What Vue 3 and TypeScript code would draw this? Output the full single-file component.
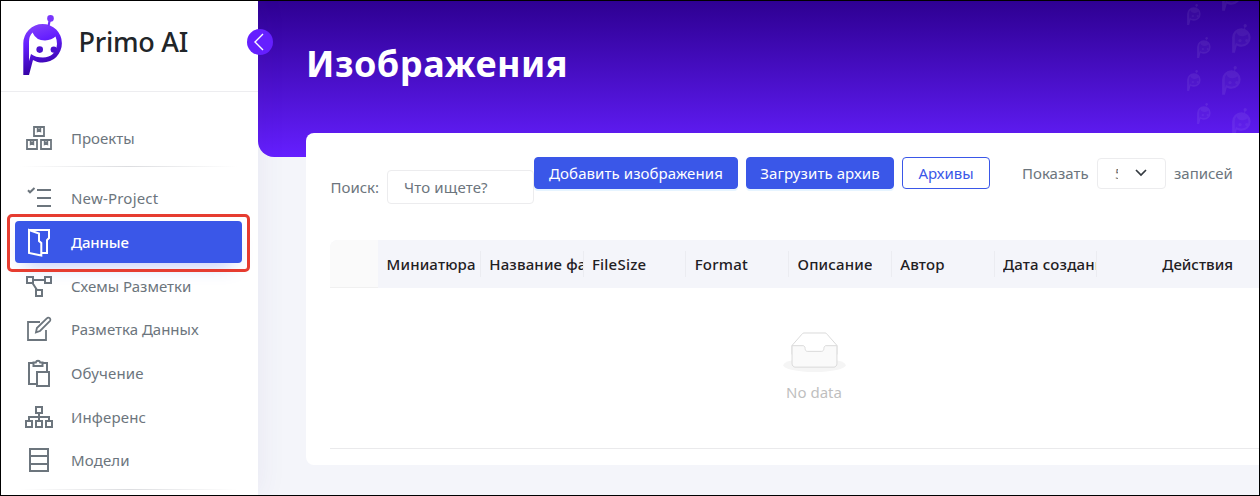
<script setup lang="ts">
interface NavItem {
  label: string
  icon: string
  cls: string
  active?: boolean
  dividerAfter?: boolean
}

const navItems: NavItem[] = [
  {
    label: 'Проекты',
    cls: 'projects',
    dividerAfter: true,
    icon: 'M10 4h10v9H10zM3 17h10v9H3zM17 17h10v9H17zM13.7 5v3l1.3-1 1.3 1V5M6.7 18v3l1.3-1 1.3 1v-3M20.7 18v3l1.3-1 1.3 1v-3',
  },
  { label: 'New-Project', cls: 'new-project', icon: 'M13 7h14M13 15h14M13 23h14M4 7.3l2 2 4.5-4.3' },
  {
    label: 'Данные',
    cls: 'data',
    active: true,
    icon: 'M5 3l10 3.5V14l2.3 2V28.5L5 26zM5 3h20v8l-2 2.2V26h-5.5',
  },
  {
    label: 'Схемы Разметки',
    cls: 'schemes',
    icon: 'M3 6h6v6H3zM21 6h6v6h-6zM12 19h6v6h-6zM9 9h12M8.5 12l4.5 7',
  },
  {
    label: 'Разметка Данных',
    cls: 'markup',
    icon: 'M16 8H4v18h18V16M12 18.3l.9-4.3L22.8 4.3a2 2 0 0 1 3 2.8L16 17z',
  },
  {
    label: 'Обучение',
    cls: 'training',
    icon: 'M12 26H5V5h4.500M18.500 5H23v8M13 14h12v14H13zM9.500 4.500h2.300a2.300 2.300 0 0 1 4.400 0h2.300V8h-9z',
  },
  {
    label: 'Инференс',
    cls: 'inference',
    icon: 'M12 5h6v6h-6zM2 19h6v6H2zM12 19h6v6h-6zM22 19h6v6h-6zM15 11v8M5 19v-4h20v4',
  },
  { label: 'Модели', cls: 'models', dividerAfter: true, icon: 'M6 4h18v22H6zM6 11h18M6 19h18' },
]

const columns: { title: string; cls: string }[] = [
  { title: 'Миниатюра', cls: 'thumb' },
  { title: 'Название файла', cls: 'name' },
  { title: 'FileSize', cls: 'size' },
  { title: 'Format', cls: 'format' },
  { title: 'Описание', cls: 'descr' },
  { title: 'Автор', cls: 'author' },
  { title: 'Дата создания', cls: 'date' },
]

const robotHead =
  'M.3 60V28.300A19.300 19.300 0 1 1 19.700 47.600C16 47.600 12.600 46.600 10 45L6 60Z' +
  'M6 46V27Q6 21 9.500 17.500Q13 25.500 22 25.500Q29 25 32.500 21.500Q34 25 34 29C33.500 37.500 28 42.500 20 42.500Q12.500 42.500 8 39Z'

const watermarks: { x: number; y: number; s: number }[] = [
  { x: 7, y: 3, s: 0.35 },
  { x: 17, y: 36, s: 0.35 },
  { x: 7, y: 69, s: 0.35 },
  { x: 17, y: 102, s: 0.35 },
  { x: 42, y: -19, s: 0.48 },
  { x: 52, y: 23, s: 0.48 },
  { x: 42, y: 65, s: 0.48 },
  { x: 52, y: 107, s: 0.48 },
]
</script>

<template>
  <div class="frame">
    <aside class="sidebar">
      <div class="brand">
        <svg class="logo" viewBox="0 0 40 60" width="40" height="60">
          <defs>
            <linearGradient id="brandFill" x1="0" y1="0" x2="0.25" y2="1">
              <stop offset="0" stop-color="#8a48f8" />
              <stop offset="0.4" stop-color="#651fff" />
              <stop offset="1" stop-color="#3200a0" />
            </linearGradient>
          </defs>
          <path :d="robotHead" fill="url(#brandFill)" fill-rule="evenodd" />
          <path d="M27 4l-1.500 7" stroke="#6f2bfc" stroke-width="2.200" />
          <circle cx="27.500" cy="3.400" r="3.300" fill="#7935fb" />
          <circle cx="16.700" cy="34.600" r="3.300" fill="#4c12cf" />
          <circle cx="30.800" cy="34.600" r="3.200" fill="#4a10cc" />
        </svg>
        <span class="brand-name">Primo AI</span>
        <button class="collapse" type="button" aria-label="Свернуть">
          <svg viewBox="0 0 26 26" width="26" height="26"><path d="M16 5L8 13l8 8" /></svg>
        </button>
      </div>
      <nav class="nav">
        <template v-for="item in navItems" :key="item.cls">
          <a class="nav-item" :class="[item.cls, { active: item.active }]">
            <svg class="nav-icon" viewBox="0 0 30 30" width="30" height="30"><path :d="item.icon" /></svg>
            <span class="nav-label">{{ item.label }}</span>
          </a>
          <div v-if="item.dividerAfter" class="divider"></div>
        </template>
      </nav>
    </aside>

    <main class="main">
      <header class="hero">
        <h1>Изображения</h1>
        <svg class="pattern" viewBox="0 0 79 156" width="79" height="156">
          <g v-for="(w, i) in watermarks" :key="i" :transform="`translate(${w.x} ${w.y}) scale(${w.s})`">
            <path :d="robotHead" fill-rule="evenodd" />
            <path d="M6 46V27Q6 21 9.500 17.500H33L34 29C33.500 37.500 28 42.500 20 42.500Q12.500 42.500 8 39Z" opacity="0.4" />
            <circle cx="27.500" cy="3.400" r="3.400" />
            <path d="M26 6h2l-1 4h-2z" />
            <circle cx="16.700" cy="34.600" r="3.300" />
            <circle cx="30.800" cy="34.600" r="3.200" />
          </g>
        </svg>
      </header>

      <section class="card">
        <div class="toolbar">
          <label class="search">
            <span class="search-label">Поиск:</span>
            <span class="search-box"><span>Что ищете?</span></span>
          </label>
          <div class="buttons">
            <button class="btn primary add" type="button"><span>Добавить изображения</span></button>
            <button class="btn primary upload" type="button"><span>Загрузить архив</span></button>
            <button class="btn outline" type="button"><span>Архивы</span></button>
          </div>
          <div class="page-size">
            <span class="show">Показать</span>
            <span class="select">
              <span class="value">50</span>
              <svg viewBox="0 0 12 8" width="12" height="8"><path d="M1 1l5 5 5-5" /></svg>
            </span>
            <span class="entries">записей</span>
          </div>
        </div>

        <div class="table">
          <div class="thead">
            <div class="th check"></div>
            <div v-for="c in columns" :key="c.cls" class="th" :class="c.cls">
              <span class="th-text">{{ c.title }}</span>
            </div>
            <div class="th actions"><span class="th-text">Действия</span></div>
          </div>
          <div class="empty">
            <svg width="63" height="40" viewBox="0 0 64 41">
              <g transform="translate(0 1)" fill="none" fill-rule="evenodd">
                <ellipse fill="#f5f5f5" cx="32" cy="33" rx="32" ry="7" />
                <g stroke="#d9d9d9">
                  <path d="M55 12.760L44.854 1.258C44.367.474 43.656 0 42.907 0H21.093c-.749 0-1.460.474-1.947 1.257L9 12.761V22h46v-9.240z" />
                  <path fill="#fafafa" d="M41.613 15.931c0-1.605.994-2.930 2.227-2.931H55v18.137C55 33.260 53.680 35 52.050 35h-40.100C10.320 35 9 33.259 9 31.137V13h11.160c1.233 0 2.227 1.323 2.227 2.928v.022c0 1.605 1.005 2.901 2.237 2.901h14.752c1.232 0 2.237-1.308 2.237-2.913v-.007z" />
                </g>
              </g>
            </svg>
            <span>No data</span>
          </div>
        </div>
      </section>
    </main>
  </div>
</template>

<style>
body {
  margin: 0;
  overflow: hidden;
}
</style>

<style scoped>
* {
  box-sizing: border-box;
}
.frame {
  width: 1260px;
  height: 496px;
  display: flex;
  overflow: hidden;
  border: 1px solid #000;
  background: #f4f5fa;
  font-family: 'Noto Sans', 'Open Sans', sans-serif;
  font-size: 15px;
  color: #6c757d;
  white-space: nowrap;
}
.sidebar {
  flex: none;
  width: 257px;
  position: relative;
  z-index: 2;
  background: #fff;
  box-shadow: 0 0 28px rgba(82, 63, 145, 0.08);
}
.brand {
  position: relative;
  display: flex;
  height: 91px;
  padding: 14px 0 0 22px;
  border-bottom: 1px solid #ededf0;
}
.brand-name {
  margin-left: 15.500px;
  font-size: 27px;
  font-weight: 500;
  line-height: 54px;
  letter-spacing: -0.250px;
  color: #212529;
}
.collapse {
  position: absolute;
  right: -15px;
  top: 28px;
  width: 26px;
  height: 26px;
  padding: 0;
  border: 0;
  border-radius: 50%;
  background: #651fff;
}
.collapse svg {
  display: block;
  fill: none;
  stroke: #fff;
  stroke-width: 1.400;
}
.nav {
  padding: 25px 16px 0 14px;
}
.nav-item {
  display: flex;
  align-items: center;
  height: 42px;
  margin-bottom: 1.700px;
  padding-left: 9px;
  border-radius: 4px;
}
.nav-icon {
  flex: none;
  fill: none;
  stroke: #6c757d;
  stroke-width: 2;
}
.nav-label {
  margin-left: 17px;
}
.new-project .nav-label {
  letter-spacing: 0.200px;
}
.training .nav-label {
  letter-spacing: 0.150px;
}
.inference .nav-label,
.models .nav-label {
  letter-spacing: 0.150px;
}
.data .nav-label {
  letter-spacing: -0.150px;
}
.projects .nav-icon,
.markup .nav-icon {
  stroke-width: 1.800;
}
.divider {
  height: 1px;
  margin: 7.300px 5px 10px;
  background: linear-gradient(90deg, transparent, #dcdde0 50%, transparent);
}
.active {
  position: relative;
  background: #3a57e8;
  color: #fff;
  font-weight: 500;
  box-shadow: 0 10px 20px -10px rgba(58, 87, 232, 0.4);
}
.active::after {
  content: '';
  position: absolute;
  inset: -7px -8px -9px;
  border: 3px solid #e63c30;
  border-radius: 5px;
}
.active .nav-icon {
  stroke: #fff;
}
.main {
  flex: 1;
  min-width: 0;
}
.hero {
  position: relative;
  height: 156px;
  padding: 36px 0 0 48px;
  border-bottom-left-radius: 16px;
  background: linear-gradient(180deg, #2e0092, #651fff);
}
h1 {
  margin: 0;
  font-size: 36px;
  line-height: 54px;
  font-weight: 700;
  letter-spacing: 0.500px;
  color: #fff;
}
.pattern {
  position: absolute;
  right: 0;
  top: 0;
  fill: #fff;
  opacity: 0.070;
}
.card {
  position: relative;
  width: 1016px;
  height: 332px;
  margin: -24px 0 0 48px;
  padding: 24px;
  border-radius: 8px;
  background: #fff;
}
.toolbar {
  display: flex;
  align-items: flex-start;
  height: 83px;
}
.search {
  display: flex;
  align-items: center;
  width: 204px;
  height: 34px;
  margin-top: 13px;
}
.search-label {
  width: 57px;
  padding-left: 0.500px;
}
.search-box {
  flex: 1;
  height: 34px;
  padding-left: 16px;
  border: 1px solid #ececee;
  border-radius: 4px;
  line-height: 33px;
  letter-spacing: 0.150px;
}
.buttons {
  display: flex;
  gap: 8px;
}
.btn {
  height: 32px;
  padding: 0;
  border: 1px solid #3a57e8;
  border-radius: 4px;
  font: inherit;
  line-height: 30px;
  text-align: center;
}
.primary {
  background: #3a57e8;
  color: #fff;
  letter-spacing: 0.080px;
  box-shadow: 0 2px 0 rgba(5, 145, 255, 0.1);
}
.add {
  width: 204px;
}
.upload {
  width: 148px;
}
.outline {
  width: 88px;
  background: #fff;
  color: #3a57e8;
}
.page-size {
  display: flex;
  align-items: center;
  height: 32px;
  margin-left: 32px;
}
.show {
  width: 75px;
}
.select {
  display: flex;
  align-items: center;
  width: 69px;
  height: 31px;
  margin-right: 8px;
  padding-left: 17px;
  border: 1px solid #ececee;
  border-radius: 4px;
}
.select .value {
  width: 3px;
  margin-right: 17px;
  overflow: hidden;
  font-size: 14px;
}
.select svg {
  fill: none;
  stroke: #343a40;
  stroke-width: 1.700;
}
.table {
  height: 209px;
  border-bottom: 1px solid #eaeaec;
}
.thead {
  display: flex;
  height: 48px;
  border-radius: 8px 8px 0 0;
  overflow: hidden;
  background: #f4f5fa;
}
.th {
  position: relative;
  display: flex;
  align-items: center;
  flex: none;
  width: 102.750px;
  padding: 0 0 0 8.500px;
  font-weight: 500;
  letter-spacing: 0.150px;
  color: #1f2023;
}
.size,
.format {
  letter-spacing: 0.200px;
}
.th + .th:not(.actions)::after {
  content: '';
  position: absolute;
  right: 0;
  top: 11px;
  width: 1px;
  height: 26px;
  background: #ebecf1;
}
.th-text {
  overflow: hidden;
}
.check {
  width: 48px;
  border-bottom: 1px solid #f0f0f0;
  background: #fafafa;
}
.actions {
  flex: 1;
  justify-content: center;
  padding: 0;
  letter-spacing: 0;
}
.empty {
  display: flex;
  flex-direction: column;
  align-items: center;
  padding-top: 44px;
  color: #bfbfbf;
}
.empty span {
  margin-top: 8px;
  line-height: 24px;
}
</style>
